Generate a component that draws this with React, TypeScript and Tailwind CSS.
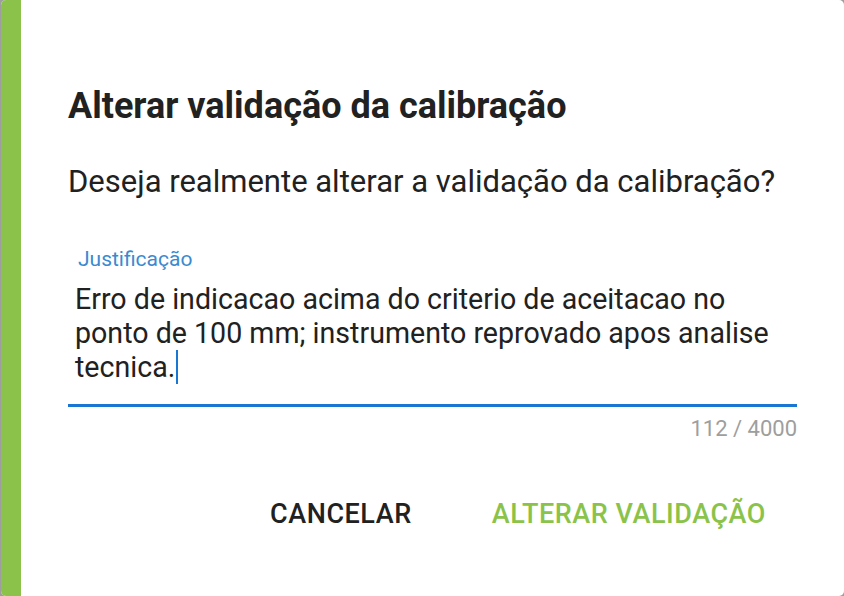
import React from "react";

const roboto = { fontFamily: "Roboto, 'Liberation Sans', sans-serif" };

export default function App() {
  const justification =
    "Erro de indicacao acima do criterio de aceitacao no ponto de 100 mm; instrumento reprovado apos analise tecnica.";

  return (
    <div className="h-[596px] w-[844px] bg-[#9e9e9e] pl-px" style={roboto}>
      <div className="flex h-full overflow-hidden rounded-[5px] bg-white">
        <div className="w-5 shrink-0 bg-[#8bc34a]" />
        <div className="flex flex-1 flex-col px-[47px] pt-[84px]">
          <h2 className="text-[36px] font-bold leading-[44px] text-[#212121]">
            Alterar validação da calibração
          </h2>

          <p className="mt-[34px] text-[31px] leading-[40px] text-[#212121]">
            Deseja realmente alterar a validação da calibração?
          </p>

          <div className="mt-[43px] flex flex-col">
            <label className="pl-[10px] text-[21px] leading-[28px] text-[#3b8ad1]">Justificação</label>
            <div className="mt-[9px] border-b-[3px] border-[#1976d2] pb-[20px] pl-[7px] text-[28.6px] leading-[34px] text-[#212121]">
              {justification}
              <span className="ml-px inline-block h-[34px] w-[2px] align-top bg-[#1976d2]" />
            </div>
            <div className="mt-[9px] text-right text-[22px] leading-[26px] text-[#9e9e9e]">112 / 4000</div>
          </div>

          <div className="mt-[52px] flex justify-end gap-[30px] pr-[6px]">
            <button className="px-[25px] text-[27px] font-medium uppercase leading-[40px] tracking-[0.02em] text-[#212121]">
              Cancelar
            </button>
            <button className="px-[25px] text-[27px] font-medium uppercase leading-[40px] tracking-[0.02em] text-[#8bc34a]">
              Alterar validação
            </button>
          </div>
        </div>
      </div>
    </div>
  );
}
